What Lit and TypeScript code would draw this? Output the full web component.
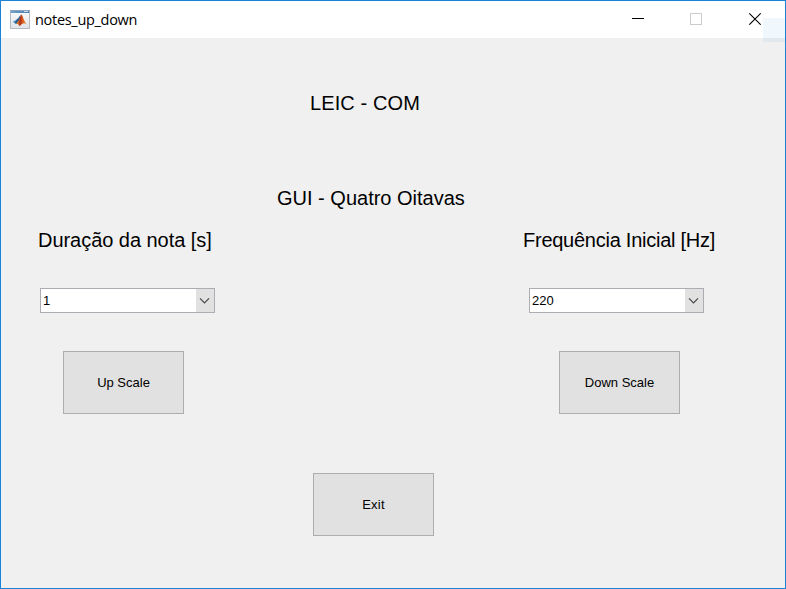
import { LitElement, html, css, svg } from "lit";
import { customElement, property } from "lit/decorators.js";

@customElement("combo-box")
class ComboBox extends LitElement {
  @property() value = "";
  static styles = css`
    :host {
      box-sizing: border-box;
      display: flex;
      width: 175px;
      height: 25px;
      border: 1px solid #abadb3;
      background: #fff;
      font-size: 13px;
      line-height: 23px;
    }
    .value { flex: 1; padding-left: 2px; }
    .arrow { width: 18px; background: #e1e1e1; }
    svg { display: block; }
  `;
  render() {
    return html`<div class="value">${this.value}</div>
      <div class="arrow">
        <svg width="18" height="23" viewBox="0 0 18 23" fill="none" stroke="#484848" stroke-width="1.2">
          <path d="M4 9.3 L8.5 13.8 L13 9.3" />
        </svg>
      </div>`;
  }
}

@customElement("push-button")
class PushButton extends LitElement {
  static styles = css`
    :host {
      box-sizing: border-box;
      display: flex;
      justify-content: center;
      width: 121px;
      height: 63px;
      border: 1px solid #adadad;
      background: #e1e1e1;
      font-size: 13px;
      line-height: 61px;
      white-space: nowrap;
    }
  `;
  render() {
    return html`<slot></slot>`;
  }
}

const logo = svg`
  <defs>
    <linearGradient id="bar" x1="0" y1="0" x2="1" y2="0">
      <stop offset="0" stop-color="#6fa3cc" /><stop offset="1" stop-color="#4a80b2" />
    </linearGradient>
    <linearGradient id="face" x1="0" y1="0" x2="0" y2="1">
      <stop offset="0" stop-color="#fafbfc" /><stop offset="1" stop-color="#dfe3e8" />
    </linearGradient>
    <linearGradient id="peak" x1="0" y1="0" x2="1" y2="0">
      <stop offset="0" stop-color="#f2a03a" /><stop offset=".4" stop-color="#a8321a" />
      <stop offset=".6" stop-color="#dd5a20" /><stop offset="1" stop-color="#f08a2c" />
    </linearGradient>
  </defs>
  <rect x=".5" y=".5" width="19" height="18" fill="url(#face)" stroke="#b4bac2" />
  <rect x="0" y="0" width="20" height="1" fill="#8ba4bb" />
  <rect x="1" y="1" width="18" height="2" fill="url(#bar)" />
  <rect x="14" y="1" width="4" height="1" fill="#c5dced" />
  <path d="M2.7 11.8 L6.2 10 Q8 9.3 10.2 5.6 L9.2 12 L6.2 14.1 Z" fill="#4a90c8" />
  <path d="M6.3 10 Q8.5 9 10.8 4.8 L9 12.7 L6.2 14.1 L4.8 12.9 Z" fill="#2f5f92" />
  <path d="M6.2 13.8 Q8.9 11.5 11 4.6 Q12.4 4.8 13.6 9 Q14.8 12.2 16.8 14.6 Q14.6 12.8 13 13.4 Q11.6 14 9.4 16.2 Q8.6 13.8 6.2 13.8 Z" fill="url(#peak)" />
`;

@customElement("app-root")
class AppRoot extends LitElement {
  static styles = css`
    :host {
      position: relative;
      box-sizing: border-box;
      display: flex;
      flex-direction: column;
      width: 786px;
      height: 589px;
      overflow: hidden;
      border: 1px solid #1883d7;
      background: #f0f0f0;
      color: #000;
      font-family: "Liberation Sans", Arial, sans-serif;
    }
    .titlebar {
      display: flex;
      align-items: center;
      height: 37px;
      flex: none;
      background: #fff;
    }
    .logo { margin-left: 9px; }
    .name {
      flex: 1;
      margin: 1px 0 0 5px;
      font: 14.5px/20px "Open Sans", "Noto Sans", sans-serif;
      letter-spacing: -0.3px;
    }
    .controls { display: block; margin: 0 24px 2px 0; }
    .client { display: flex; flex-direction: column; }
    .heading {
      font-size: 20px;
      line-height: 24px;
      white-space: nowrap;
    }
    .course { margin: 53px 0 0 309px; letter-spacing: 0.1px; }
    .title { margin: 71px 0 0 276px; }
    .columns {
      display: grid;
      grid-template-columns: 485px 1fr;
      margin: 18px 0 0 37px;
    }
    .columns combo-box { margin-top: 36px; }
    .columns push-button { margin-top: 38px; }
    .left .heading { letter-spacing: -0.04px; }
    .right .heading { letter-spacing: -0.25px; }
    .left combo-box { margin-left: 2px; }
    .left push-button { margin-left: 25px; }
    .right combo-box { margin-left: 6px; }
    .right push-button { margin-left: 36px; }
    .exit { margin: 59px 0 0 312px; letter-spacing: 0.2px; }
    .glow {
      position: absolute;
      right: 0;
      top: 17px;
      width: 22px;
      height: 24px;
      background: rgba(0, 120, 215, 0.06);
    }
  `;
  render() {
    return html`
      <div class="titlebar">
        <svg class="logo" width="20" height="19" viewBox="0 0 20 19">${logo}</svg>
        <div class="name">notes_up_down</div>
        <svg class="controls" width="130" height="13" viewBox="0 0 130 13" fill="none">
          <path d="M1 6.5 H13" stroke="#000" />
          <rect x="59.5" y="1.5" width="11" height="11" stroke="#ccc" />
          <path d="M118.3 1.3 L129.7 12.7 M129.7 1.3 L118.3 12.7" stroke="#000" stroke-width="1.1" />
        </svg>
      </div>
      <div class="client">
        <div class="heading course">LEIC - COM</div>
        <div class="heading title">GUI - Quatro Oitavas</div>
        <div class="columns">
          <div class="left">
            <div class="heading">Duração da nota [s]</div>
            <combo-box value="1"></combo-box>
            <push-button>Up Scale</push-button>
          </div>
          <div class="right">
            <div class="heading">Frequência Inicial [Hz]</div>
            <combo-box value="220"></combo-box>
            <push-button>Down Scale</push-button>
          </div>
        </div>
        <push-button class="exit">Exit</push-button>
      </div>
      <div class="glow"></div>
    `;
  }
}
